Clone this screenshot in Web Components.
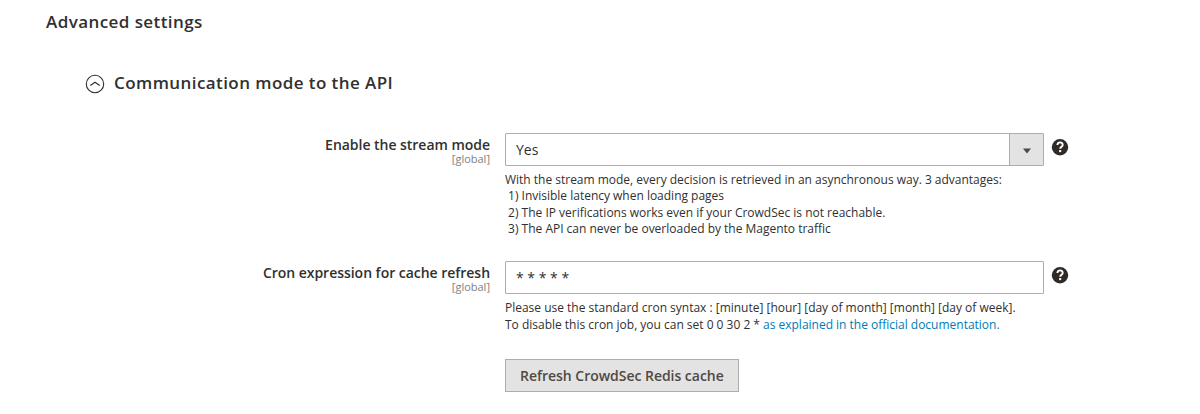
<!DOCTYPE html>
<html lang="en">
<head>
<meta charset="utf-8">
<title>Advanced settings</title>
<style>
  body {
    margin: 0;
    background: #fff;
    color: #303030;
    font-family: "Open Sans", sans-serif;
  }
</style>
</head>
<body>
<config-section heading="Advanced settings">
  <config-group heading="Communication mode to the API">
    <config-field label="Enable the stream mode" scope="[global]" tooltip>
      <select-box>Yes</select-box>
      <span slot="note">With the stream mode, every decision is retrieved in an asynchronous way. 3 advantages:<br>&nbsp;1) Invisible latency when loading pages<br>&nbsp;2) The IP verifications works even if your CrowdSec is not reachable.<br>&nbsp;3) The API can never be overloaded by the Magento traffic</span>
    </config-field>
    <config-field label="Cron expression for cache refresh" scope="[global]" tooltip>
      <text-box>* * * * *</text-box>
      <span slot="note">Please use the standard cron syntax : [minute] [hour] [day of month] [month] [day of week].<br>To disable this cron job, you can set 0 0 30 2 * <doc-link>as explained in the official documentation.</doc-link></span>
    </config-field>
    <config-field>
      <action-button>Refresh CrowdSec Redis cache</action-button>
    </config-field>
  </config-group>
</config-section>

<script>
const define = (name, html) => {
  customElements.define(name, class extends HTMLElement {
    connectedCallback() {
      if (this.shadowRoot) return;
      this.attachShadow({ mode: 'open' });
      const elem = document.createElement('template');
      elem.innerHTML = html(this);
      this.shadowRoot.append(elem.content);
    }
  });
};

define('config-section', (el) => `
  <h2>${el.getAttribute('heading')}</h2>
  <slot></slot>

  <style>
  :host {
    display: block;
    padding: 10px 0 0 46px;
  }

  h2 {
    margin: 0;
    font-size: 17px;
    font-weight: 600;
    line-height: 24px;
    letter-spacing: 0.425px;
  }
  </style>
`);

define('config-group', (el) => `
  <div class="head">
    <svg width="20" height="20" viewBox="0 0 20 20" fill="none" stroke="#303030">
      <circle cx="10" cy="10" r="8.7" stroke-width="1.1" />
      <path d="M5.3 11.5 10 8.3l4.7 3.2" stroke-width="1.2" />
    </svg>
    <h3>${el.getAttribute('heading')}</h3>
  </div>
  <div class="fields"><slot></slot></div>

  <style>
  :host {
    display: block;
    margin-top: 37px;
    padding-left: 39px;
  }

  .head {
    display: flex;
    align-items: center;
    gap: 9px;
    height: 24px;
  }

  svg {
    margin-top: 2px;
  }

  h3 {
    margin: 0;
    font-size: 17px;
    font-weight: 600;
    line-height: 24px;
    letter-spacing: 0.425px;
  }

  .fields {
    display: flex;
    flex-direction: column;
    gap: 24px;
    margin-top: 38px;
  }
  </style>
`);

define('config-field', (el) => `
  <div class="label">
    <b>${el.getAttribute('label') || ''}</b>
    <small>${el.getAttribute('scope') || ''}</small>
  </div>
  <div class="value">
    <slot></slot>
    <div class="note"><slot name="note"></slot></div>
  </div>
  ${el.hasAttribute('tooltip') ? '<help-icon></help-icon>' : ''}

  <style>
  :host {
    display: grid;
    grid-template-columns: 420px 539px 25px;
    align-items: start;
  }

  :host(:last-child) {
    margin-top: 2px;
  }

  .label {
    display: flex;
    flex-direction: column;
    align-items: flex-end;
    margin-right: 15px;
    padding-top: 3px;
  }

  b {
    font-size: 14px;
    font-weight: 600;
    line-height: 17px;
    letter-spacing: -0.03px;
  }

  small {
    color: #808080;
    font-size: 11px;
    line-height: 12px;
  }

  .note {
    margin-top: 6px;
    font-size: 12px;
    line-height: 16.32px;
    letter-spacing: -0.01px;
  }

  .value {
    min-width: 0;
  }

  help-icon {
    margin: 5px 0 0 7px;
  }
  </style>
`);

define('help-icon', () => `
  <svg width="18" height="18" viewBox="0 0 18 18">
    <circle cx="9" cy="9.2" r="8.2" fill="#302a27" />
    <path d="M6.4 7C6.5 3.5 11.8 3.6 11.7 6.9 11.7 8.7 9.2 8.9 9.2 10.8" fill="none" stroke="#fff" stroke-width="1.9" />
    <rect x="8.1" y="12.1" width="2.1" height="2" fill="#fff" />
  </svg>

  <style>
  :host {
    display: block;
  }

  svg {
    display: block;
  }
  </style>
`);

define('select-box', () => `
  <div class="text"><slot></slot></div>
  <div class="arrow">
    <svg width="8" height="6" viewBox="0 0 8 6"><path d="M0 .5h8L4 5.5z" fill="#514943" /></svg>
  </div>

  <style>
  :host {
    display: flex;
    box-sizing: border-box;
    height: 33px;
    border: 1px solid #adadad;
    border-radius: 1px;
    font-size: 14px;
    line-height: 31px;
  }

  .text {
    flex: 1;
    padding-left: 10px;
  }

  .arrow {
    display: flex;
    align-items: center;
    justify-content: center;
    width: 34px;
    padding-top: 2px;
    box-sizing: border-box;
    border-left: 1px solid #adadad;
    background: #e3e3e3;
  }
  </style>
`);

define('text-box', () => `
  <slot></slot>

  <style>
  :host {
    display: block;
    box-sizing: border-box;
    height: 33px;
    padding-left: 10px;
    border: 1px solid #adadad;
    border-radius: 1px;
    font-size: 14px;
    line-height: 31px;
  }
  </style>
`);

define('doc-link', () => `
  <slot></slot>

  <style>
  :host {
    color: #007bb5;
  }
  </style>
`);

define('action-button', () => `
  <button><slot></slot></button>

  <style>
  :host {
    display: block;
  }

  button {
    display: block;
    box-sizing: border-box;
    height: 33px;
    padding: 0 14px;
    border: 1px solid #adadad;
    border-radius: 0;
    background: #e3e3e3;
    color: #514943;
    font: 600 14px/31px "Open Sans", sans-serif;
    letter-spacing: -0.03px;
    white-space: nowrap;
  }
  </style>
`);
</script>
</body>
</html>
